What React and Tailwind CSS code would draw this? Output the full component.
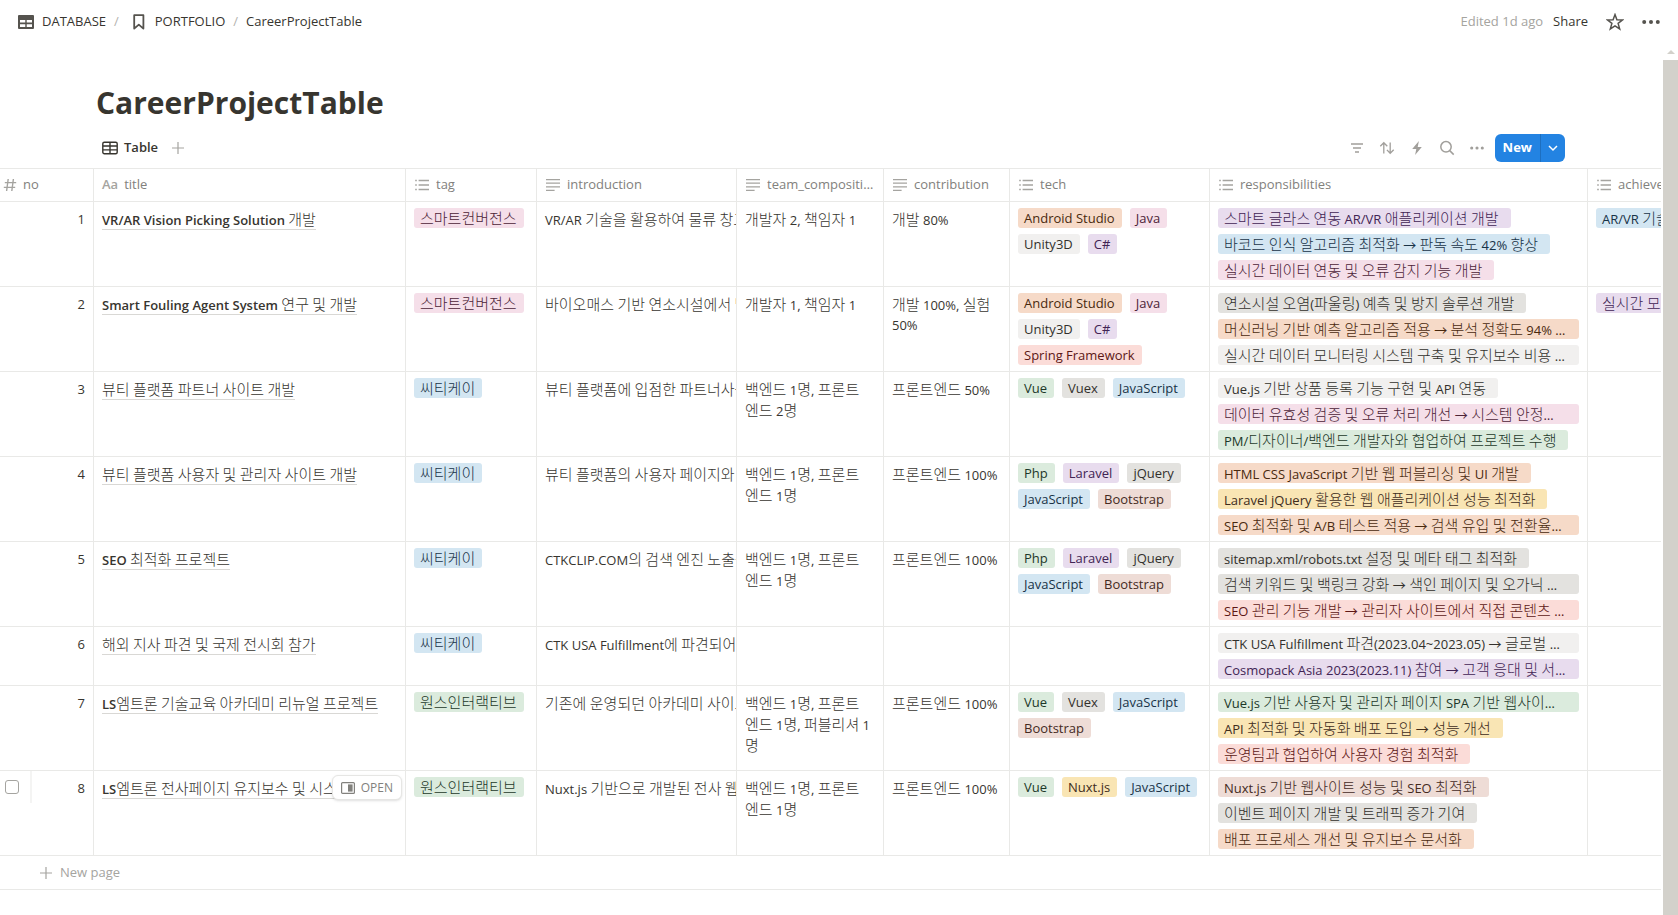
import React from "react";

const TONES = {
  default: "bg-[#f1f0ef] text-[#32302c]",
  gray: "bg-[#e3e2df] text-[#32302c]",
  pink: "bg-[#f5dfe9] text-[#4c2337]",
  blue: "bg-[#d3e6f2] text-[#183347]",
  green: "bg-[#dbebdd] text-[#1c3829]",
  orange: "bg-[#f6dac8] text-[#49290e]",
  purple: "bg-[#e8dcee] text-[#412454]",
  red: "bg-[#fbdcd8] text-[#5d1715]",
  yellow: "bg-[#f9e5b4] text-[#402c1b]",
  brown: "bg-[#eedcd6] text-[#442a1e]",
};

const HANGUL = /([\uac00-\ud7a3]+)/;

// Hangul is set a little larger and lighter than Latin so that both scripts look even.
function Mixed({ children }) {
  return children.split(HANGUL).map((part, i) =>
    HANGUL.test(part) ? (
      <span key={i} className="text-[15px] font-light">
        {part}
      </span>
    ) : (
      part
    )
  );
}

function Svg({ className = "", box = 16, children, ...rest }) {
  return (
    <svg viewBox={`0 0 ${box} ${box}`} className={`shrink-0 ${className}`} fill="none" stroke="currentColor" aria-hidden="true" {...rest}>
      {children}
    </svg>
  );
}

const ListIcon = () => (
  <Svg className="size-4" strokeWidth="1.3">
    <path d="M1.2 3.5h1.6M1.2 8h1.6M1.2 12.5h1.6M4.6 3.5h10.4M4.6 8h10.4M4.6 12.5h10.4" />
  </Svg>
);
const TextIcon = () => (
  <Svg className="size-4" strokeWidth="1.2">
    <path d="M1 2.6h14M1 6.2h14M1 9.8h14M1 13.4h8.6" />
  </Svg>
);
const HashIcon = () => (
  <Svg className="size-3.5" box={14} strokeWidth="1.4">
    <path d="M5.2 1 3.6 13M10.4 1 8.8 13M1.8 4.6h11.4M.8 9.4h11.4" />
  </Svg>
);
const AaIcon = () => <span className="text-[13px] font-semibold">Aa</span>;
const PlusIcon = ({ className }) => (
  <Svg className={className} box={12} strokeWidth="1.2">
    <path d="M6 0v12M0 6h12" />
  </Svg>
);
const Dots = ({ className }) => (
  <Svg className={className} box={18} fill="currentColor" stroke="none">
    <circle cx="2.2" cy="9" r="2" />
    <circle cx="9" cy="9" r="2" />
    <circle cx="15.8" cy="9" r="2" />
  </Svg>
);

const COLUMNS = [
  { name: "no", icon: HashIcon, width: "w-[94px]", pad: "pl-[3px]" },
  { name: "title", icon: AaIcon, width: "w-[312px]" },
  { name: "tag", icon: ListIcon, width: "w-[131px]" },
  { name: "introduction", icon: TextIcon, width: "w-[200px]" },
  { name: "team_composition", icon: TextIcon, width: "w-[147px]" },
  { name: "contribution", icon: TextIcon, width: "w-[126px]" },
  { name: "tech", icon: ListIcon, width: "w-[200px]" },
  { name: "responsibilities", icon: ListIcon, width: "w-[378px]" },
  { name: "achievements", icon: ListIcon, width: "w-[200px]" },
];

const ROWS = [
  {
    title: "VR/AR Vision Picking Solution 개발",
    tag: ["스마트컨버전스", "pink"],
    intro: "VR/AR 기술을 활용하여 물류 창고",
    team: "개발자 2, 책임자 1",
    contribution: "개발 80%",
    tech: [["Android Studio", "orange"], ["Java", "pink"], ["Unity3D", "default"], ["C#", "purple"]],
    duties: [
      ["스마트 글라스 연동 AR/VR 애플리케이션 개발", "purple"],
      ["바코드 인식 알고리즘 최적화 → 판독 속도 42% 향상", "blue"],
      ["실시간 데이터 연동 및 오류 감지 기능 개발", "pink"],
    ],
    results: [["AR/VR 기술", "blue"]],
  },
  {
    title: "Smart Fouling Agent System 연구 및 개발",
    tag: ["스마트컨버전스", "pink"],
    intro: "바이오매스 기반 연소시설에서 발생",
    team: "개발자 1, 책임자 1",
    contribution: "개발 100%, 실험 50%",
    tech: [["Android Studio", "orange"], ["Java", "pink"], ["Unity3D", "default"], ["C#", "purple"], ["Spring Framework", "red"]],
    duties: [
      ["연소시설 오염(파울링) 예측 및 방지 솔루션 개발", "gray"],
      ["머신러닝 기반 예측 알고리즘 적용 → 분석 정확도 94% 달성", "orange"],
      ["실시간 데이터 모니터링 시스템 구축 및 유지보수 비용 절감", "default"],
    ],
    results: [["실시간 모니터링", "purple"]],
  },
  {
    title: "뷰티 플랫폼 파트너 사이트 개발",
    tag: ["씨티케이", "blue"],
    intro: "뷰티 플랫폼에 입점한 파트너사를",
    team: "백엔드 1명, 프론트엔드 2명",
    contribution: "프론트엔드 50%",
    tech: [["Vue", "green"], ["Vuex", "gray"], ["JavaScript", "blue"]],
    duties: [
      ["Vue.js 기반 상품 등록 기능 구현 및 API 연동", "default"],
      ["데이터 유효성 검증 및 오류 처리 개선 → 시스템 안정성 향상", "pink"],
      ["PM/디자이너/백엔드 개발자와 협업하여 프로젝트 수행", "green"],
    ],
  },
  {
    title: "뷰티 플랫폼 사용자 및 관리자 사이트 개발",
    tag: ["씨티케이", "blue"],
    intro: "뷰티 플랫폼의 사용자 페이지와 관리",
    team: "백엔드 1명, 프론트엔드 1명",
    contribution: "프론트엔드 100%",
    tech: [["Php", "green"], ["Laravel", "purple"], ["jQuery", "gray"], ["JavaScript", "blue"], ["Bootstrap", "brown"]],
    duties: [
      ["HTML CSS JavaScript 기반 웹 퍼블리싱 및 UI 개발", "orange"],
      ["Laravel jQuery 활용한 웹 애플리케이션 성능 최적화", "yellow"],
      ["SEO 최적화 및 A/B 테스트 적용 → 검색 유입 및 전환율을 개선", "orange"],
    ],
  },
  {
    title: "SEO 최적화 프로젝트",
    tag: ["씨티케이", "blue"],
    intro: "CTKCLIP.COM의 검색 엔진 노출을",
    team: "백엔드 1명, 프론트엔드 1명",
    contribution: "프론트엔드 100%",
    tech: [["Php", "green"], ["Laravel", "purple"], ["jQuery", "gray"], ["JavaScript", "blue"], ["Bootstrap", "brown"]],
    duties: [
      ["sitemap.xml/robots.txt 설정 및 메타 태그 최적화", "gray"],
      ["검색 키워드 및 백링크 강화 → 색인 페이지 및 오가닉 트래픽 증가", "gray"],
      ["SEO 관리 기능 개발 → 관리자 사이트에서 직접 콘텐츠 관리", "red"],
    ],
  },
  {
    title: "해외 지사 파견 및 국제 전시회 참가",
    tag: ["씨티케이", "blue"],
    intro: "CTK USA Fulfillment에 파견되어",
    team: "",
    contribution: "",
    tech: [],
    duties: [
      ["CTK USA Fulfillment 파견(2023.04~2023.05) → 글로벌 업무 지원", "default"],
      ["Cosmopack Asia 2023(2023.11) 참여 → 고객 응대 및 서비스 소개", "purple"],
    ],
  },
  {
    title: "LS엠트론 기술교육 아카데미 리뉴얼 프로젝트",
    tag: ["원스인터랙티브", "green"],
    intro: "기존에 운영되던 아카데미 사이트를",
    team: "백엔드 1명, 프론트엔드 1명, 퍼블리셔 1명",
    contribution: "프론트엔드 100%",
    tech: [["Vue", "green"], ["Vuex", "gray"], ["JavaScript", "blue"], ["Bootstrap", "brown"]],
    duties: [
      ["Vue.js 기반 사용자 및 관리자 페이지 SPA 기반 웹사이트 구축", "green"],
      ["API 최적화 및 자동화 배포 도입 → 성능 개선", "yellow"],
      ["운영팀과 협업하여 사용자 경험 최적화", "red"],
    ],
  },
  {
    title: "LS엠트론 전사페이지 유지보수 및 시스템",
    tag: ["원스인터랙티브", "green"],
    intro: "Nuxt.js 기반으로 개발된 전사 웹사이트",
    team: "백엔드 1명, 프론트엔드 1명",
    contribution: "프론트엔드 100%",
    tech: [["Vue", "green"], ["Nuxt.js", "yellow"], ["JavaScript", "blue"]],
    duties: [
      ["Nuxt.js 기반 웹사이트 성능 및 SEO 최적화", "brown"],
      ["이벤트 페이지 개발 및 트래픽 증가 기여", "gray"],
      ["배포 프로세스 개선 및 유지보수 문서화", "orange"],
    ],
    active: true,
  },
];

function Tags({ items, stacked = false }) {
  return (
    <div className={`flex gap-x-2 gap-y-1.5 px-2 py-1.5 ${stacked ? "flex-col items-start" : "flex-wrap"}`}>
      {items.map(([label, tone]) => (
        <span key={label} className={`h-5 max-w-full truncate rounded-[3px] pl-1.5 leading-5 ${stacked ? "pr-3" : "pr-[7px]"} ${TONES[tone]}`}>
          <Mixed>{label}</Mixed>
        </span>
      ))}
    </div>
  );
}

function Cell({ children, className = "" }) {
  return <td className={`overflow-hidden border-r border-b border-[#e9e9e7] p-0 align-top ${className}`}>{children}</td>;
}

function Prose({ children, className = "pr-2" }) {
  return (
    <div className={`py-[7px] pl-2 leading-5 ${className}`}>
      <Mixed>{children}</Mixed>
    </div>
  );
}

function Row({ row, index }) {
  return (
    <tr>
      <Cell>
        <div className="flex h-8 items-stretch">
          {row.active && (
            <label className="flex w-8 items-center border-r-2 border-[#f4f4f3] pl-[5px]">
              <input type="checkbox" aria-label={`Select row ${index}`} className="size-3.5 appearance-none rounded-[3px] border border-[#a5a4a0] bg-white" />
            </label>
          )}
          <span className="ml-auto px-2 py-[7px] leading-[21px]">{index}</span>
        </div>
      </Cell>
      <Cell className="relative">
        <div className="overflow-hidden px-2 py-[7px] leading-5 whitespace-nowrap">
          <a href="#row" className="border-b border-[#d9d8d5] font-semibold">
            <Mixed>{row.title}</Mixed>
          </a>
        </div>
        {row.active && (
          <button className="absolute top-1 right-[3px] flex h-[25px] items-center gap-1.5 rounded-md border border-[#e6e6e4] bg-white px-2 text-xs font-medium text-[#82817d] shadow-sm">
            <Svg className="size-3.5" box={14} strokeWidth="1.2">
              <rect x=".6" y="1.6" width="12.8" height="10.8" rx="1" />
              <rect x="7" y="3.4" width="4.6" height="7.2" fill="currentColor" stroke="none" />
            </Svg>
            OPEN
          </button>
        )}
      </Cell>
      <Cell>
        <Tags items={[row.tag]} />
      </Cell>
      <Cell>
        <Prose className="overflow-hidden whitespace-nowrap">{row.intro}</Prose>
      </Cell>
      <Cell>
        <Prose className="pr-3">{row.team}</Prose>
      </Cell>
      <Cell>
        <Prose>{row.contribution}</Prose>
      </Cell>
      <Cell>
        <Tags items={row.tech} />
      </Cell>
      <Cell>
        <Tags items={row.duties} stacked />
      </Cell>
      <Cell>
        <Tags items={row.results ?? []} stacked />
      </Cell>
    </tr>
  );
}

function TopBar() {
  return (
    <header className="flex h-11 shrink-0 items-center justify-between px-[18px]">
      <nav aria-label="Breadcrumb" className="flex items-center">
        <a href="#database" className="flex items-center gap-2">
          <Svg className="size-4 text-[#55534e]" fill="currentColor" stroke="none">
            <path
              fillRule="evenodd"
              d="M1 1h14a1 1 0 0 1 1 1v12a1 1 0 0 1-1 1H1a1 1 0 0 1-1-1V2a1 1 0 0 1 1-1Zm1 5v2.6h5.3V6H2Zm6.7 0v2.6H14V6H8.7ZM2 10.2V13h5.3v-2.8H2Zm6.7 0V13H14v-2.8H8.7Z"
            />
          </Svg>
          DATABASE
        </a>
        <span className="px-2 text-[#b4b3af]">/</span>
        <a href="#portfolio" className="flex items-center gap-2 pl-1">
          <Svg className="size-4 text-[#55534e]" strokeWidth="1.8">
            <path d="M3.2 1.2h9.2v13.4l-4.6-4-4.6 4Z" strokeLinejoin="round" />
          </Svg>
          PORTFOLIO
        </a>
        <span className="px-2 text-[#b4b3af]">/</span>
        <a href="#page">CareerProjectTable</a>
      </nav>
      <div className="flex items-center">
        <span className="text-[#a5a4a0]">Edited 1d ago</span>
        <button className="ml-2.5">Share</button>
        <button aria-label="Favorite" className="ml-[18px]">
          <Svg className="size-[18px] text-[#55534e]" box={18} strokeWidth="1.5">
            <path d="m9 1.6 1.9 5.1 5.6.3-4.4 3.4 1.6 5.6L9 12.9 4.3 16l1.6-5.6L1.5 7l5.6-.3Z" />
          </Svg>
        </button>
        <button aria-label="More" className="ml-[18px]">
          <Dots className="size-[18px] text-[#55534e]" />
        </button>
      </div>
    </header>
  );
}

function ToolButton({ label, children }) {
  return (
    <button aria-label={label} className="flex size-7 items-center justify-center">
      {children}
    </button>
  );
}

function ViewBar() {
  return (
    <div className="flex h-10 items-center justify-between px-24">
      <div className="flex items-center">
        <button className="flex items-center gap-1.5 pl-1.5 font-semibold">
          <Svg className="size-4" strokeWidth="1.4">
            <rect x=".8" y="2.2" width="14.4" height="11.6" rx="1.5" />
            <path d="M1 6h14M1 9.9h14M8 2.5v11.2" />
          </Svg>
          Table
        </button>
        <button aria-label="Add view" className="pl-3.5 text-[#a5a4a0]">
          <PlusIcon className="size-3" />
        </button>
      </div>
      <div className="flex items-center gap-0.5 text-[#a19f9b]">
        <ToolButton label="Filter">
          <Svg className="size-3.5" box={14} strokeWidth="1.5">
            <path d="M1 3h12M3 7h8M5 11h4" />
          </Svg>
        </ToolButton>
        <ToolButton label="Sort">
          <Svg className="size-4" strokeWidth="1.3">
            <path d="M4.8 13.5V2.8M1.3 6.2l3.5-3.5 3.5 3.5M11.2 2.5v10.7M7.9 9.9l3.3 3.4 3.5-3.5" />
          </Svg>
        </ToolButton>
        <ToolButton label="Automations">
          <Svg className="size-4" fill="currentColor" stroke="none">
            <path d="M9.9.9 3.2 9h4.1L6.1 15.1 12.8 7H8.7Z" />
          </Svg>
        </ToolButton>
        <ToolButton label="Search">
          <Svg className="size-4" strokeWidth="1.5">
            <circle cx="7" cy="6.8" r="5.2" />
            <path d="m10.7 10.6 4 4" />
          </Svg>
        </ToolButton>
        <ToolButton label="View options">
          <Dots className="size-3.5" />
        </ToolButton>
        <div className="ml-0.5 flex h-7 rounded-md bg-[#2383e2] text-white">
          <button className="border-r border-[#1d6fc0] px-2 font-bold">New</button>
          <button aria-label="New options" className="flex w-6 items-center justify-center">
            <Svg className="size-2.5" box={10} strokeWidth="1.5">
              <path d="m1 3 4 4 4-4" />
            </Svg>
          </button>
        </div>
      </div>
    </div>
  );
}

export default function App() {
  return (
    <div className="flex h-screen flex-col overflow-hidden bg-white font-['Open_Sans','Noto_Sans_CJK_KR',sans-serif] text-[13px] text-[#37352f]">
      <TopBar />
      <div className="flex min-h-0 flex-1">
        <main className="min-w-0 flex-1 overflow-hidden">
          <h1 className="px-24 pt-[39px] pb-[5px] text-[30px] leading-10 font-bold">CareerProjectTable</h1>
          <ViewBar />
          <div className="overflow-hidden border-t border-[#e9e9e7]">
            <table className="w-px table-fixed border-separate border-spacing-0">
              <thead>
                <tr>
                  {COLUMNS.map(({ name, icon: Icon, width, pad = "pl-2" }) => (
                    <th key={name} className={`h-[33px] border-r border-b border-[#e9e9e7] py-0 pr-1.5 text-left font-normal text-[#82817d] ${width} ${pad}`}>
                      <div className="flex items-center gap-1.5">
                        <span className="flex text-[#a5a4a0]">
                          <Icon />
                        </span>
                        <span className="min-w-0 truncate">{name}</span>
                      </div>
                    </th>
                  ))}
                </tr>
              </thead>
              <tbody>
                {ROWS.map((row, i) => (
                  <Row key={row.title} row={row} index={i + 1} />
                ))}
              </tbody>
            </table>
            <button className="flex h-[34px] w-full items-center gap-2 border-b border-[#e9e9e7] pl-10 text-[#a5a4a0]">
              <PlusIcon className="size-3" />
              New page
            </button>
          </div>
        </main>
        <div aria-hidden="true" className="flex w-[17px] flex-col pl-0.5">
          <div className="flex h-4 items-center justify-center">
            <div className="border-x-4 border-b-4 border-x-transparent border-b-[#d3d1cb]" />
          </div>
          <div className="flex-1 bg-[#d3d1cb]" />
        </div>
      </div>
    </div>
  );
}
